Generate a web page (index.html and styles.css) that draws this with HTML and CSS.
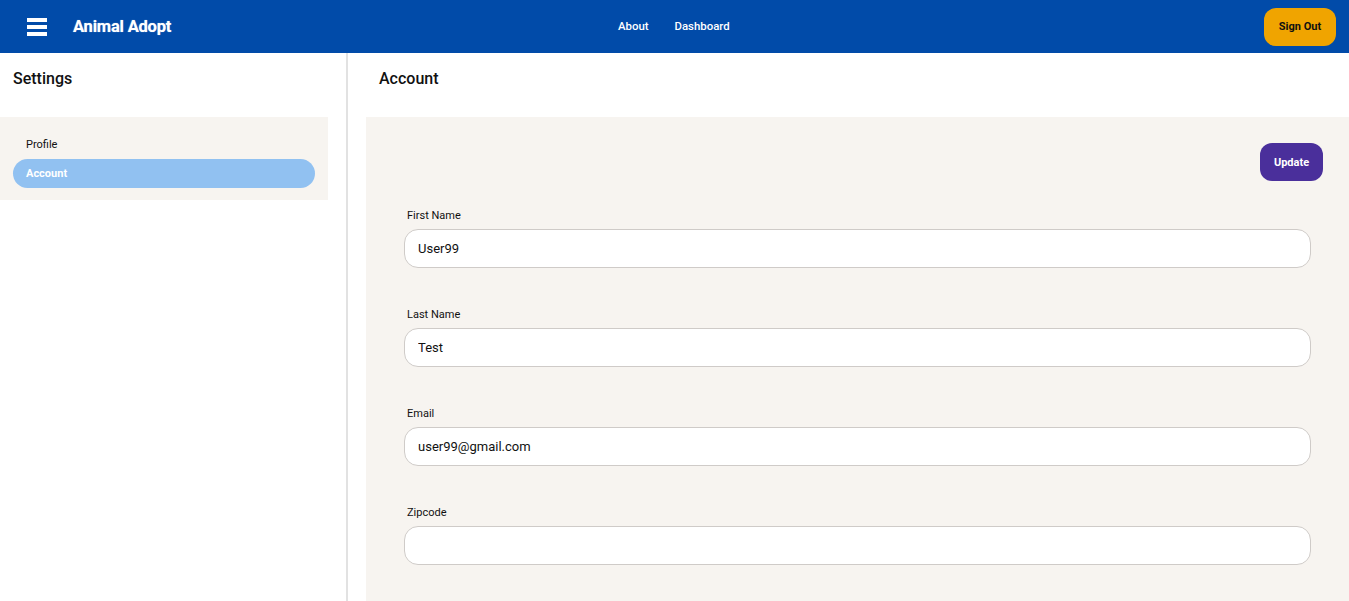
FILE: index.html
```html
<!DOCTYPE html>
<html>
<head>
<meta charset="utf-8">
<link rel="stylesheet" href="styles.css">
</head>
<body>
<header class="topbar">
  <div class="brand">
    <button class="menu-btn" aria-label="menu">
      <svg width="20" height="18" viewBox="0 0 20 18"><rect x="0" y="0" width="20" height="4" fill="#fff"/><rect x="0" y="7" width="20" height="4" fill="#fff"/><rect x="0" y="14" width="20" height="4" fill="#fff"/></svg>
    </button>
    <span class="title">Animal Adopt</span>
  </div>
  <nav class="nav">
    <a href="#">About</a>
    <a href="#">Dashboard</a>
  </nav>
  <button class="signout">Sign Out</button>
</header>
<div class="layout">
  <aside class="sidebar">
    <h2 class="side-title">Settings</h2>
    <div class="side-panel">
      <div class="side-item">Profile</div>
      <div class="side-item active">Account</div>
    </div>
  </aside>
  <main class="main">
    <h2 class="main-title">Account</h2>
    <section class="panel">
      <div class="actions"><button class="update">Update</button></div>
      <div class="field">
        <label>First Name</label>
        <input type="text" value="User99">
      </div>
      <div class="field">
        <label>Last Name</label>
        <input type="text" value="Test">
      </div>
      <div class="field">
        <label>Email</label>
        <input type="text" value="user99@gmail.com">
      </div>
      <div class="field">
        <label>Zipcode</label>
        <input type="text" value="">
      </div>
    </section>
  </main>
</div>
</body>
</html>
```
FILE: styles.css
```css
* { box-sizing: border-box; }
html, body { margin: 0; padding: 0; }
body {
  font-family: Roboto, "Liberation Sans", Arial, sans-serif;
  color: #111;
  background: #fff;
  overflow: hidden;
}
.topbar {
  height: 53px;
  background: #014ba9;
  display: flex;
  align-items: center;
  padding: 0 13px 0 27px;
  position: relative;
}
.brand { display: flex; align-items: center; flex: 1; }
.menu-btn {
  background: none; border: 0; padding: 0; margin: 0;
  width: 20px; height: 18px; display: flex;
}
.title {
  color: #fff;
  font-weight: 700;
  font-size: 16.5px;
  margin-left: 26px;
  letter-spacing: -0.2px;
  text-shadow: 0 0 1px rgba(255,255,255,0.6);
}
.nav {
  position: absolute;
  left: 618px;
  top: 0;
  height: 52px;
  display: flex;
  align-items: center;
  gap: 26px;
}
.nav a {
  color: #fff;
  text-decoration: none;
  font-size: 11.4px;
  font-weight: 500;
}
.signout {
  width: 72px;
  height: 38px;
  border: 0;
  border-radius: 12px;
  background: #f0a400;
  color: #111;
  font-family: inherit;
  font-weight: 700;
  font-size: 11px;
}
.layout { display: flex; height: 548px; }
.sidebar {
  width: 348px;
  border-right: 2px solid #e2e2e2;
  flex-shrink: 0;
}
.side-title, .main-title {
  margin: 0;
  height: 64px;
  display: flex;
  align-items: center;
  padding-bottom: 14px;
  font-size: 16px;
  font-weight: 500;
  color: #111;
}
.side-title { padding-left: 13px; }
.side-panel {
  width: 328px;
  background: #f7f4f0;
  padding: 13px 13px 12px 13px;
}
.side-item {
  font-size: 11px;
  height: 29px;
  display: flex;
  align-items: center;
  padding-left: 13px;
  color: #111;
}
.side-item.active {
  background: #91c1f1;
  color: #fff;
  font-weight: 700;
  border-radius: 15px;
}
.main { flex: 1; padding-left: 18px; }
.main-title { padding-left: 13px; }
.panel {
  background: #f7f4f0;
  height: 484px;
  padding: 26px 26px 0 38px;
}
.actions {
  display: flex;
  justify-content: flex-end;
  height: 38px;
  margin-bottom: 27px;
}
.update {
  width: 63px;
  height: 38px;
  border: 0;
  border-radius: 12px;
  background: #4a2f9b;
  color: #fff;
  font-family: inherit;
  font-weight: 700;
  font-size: 11px;
}
.field {
  margin-right: 12px;
  display: flex;
  flex-direction: column;
}
.field + .field { margin-top: 39px; }
.field label {
  font-size: 11px;
  padding-left: 3px;
  height: 15px;
  line-height: 15px;
  margin-bottom: 6px;
  color: #111;
}
.field input {
  height: 39px;
  border: 1px solid #cfcbc8;
  border-radius: 14px;
  background: #fff;
  padding: 0 13px;
  font-family: inherit;
  font-size: 13px;
  color: #111;
  outline: none;
}
```
